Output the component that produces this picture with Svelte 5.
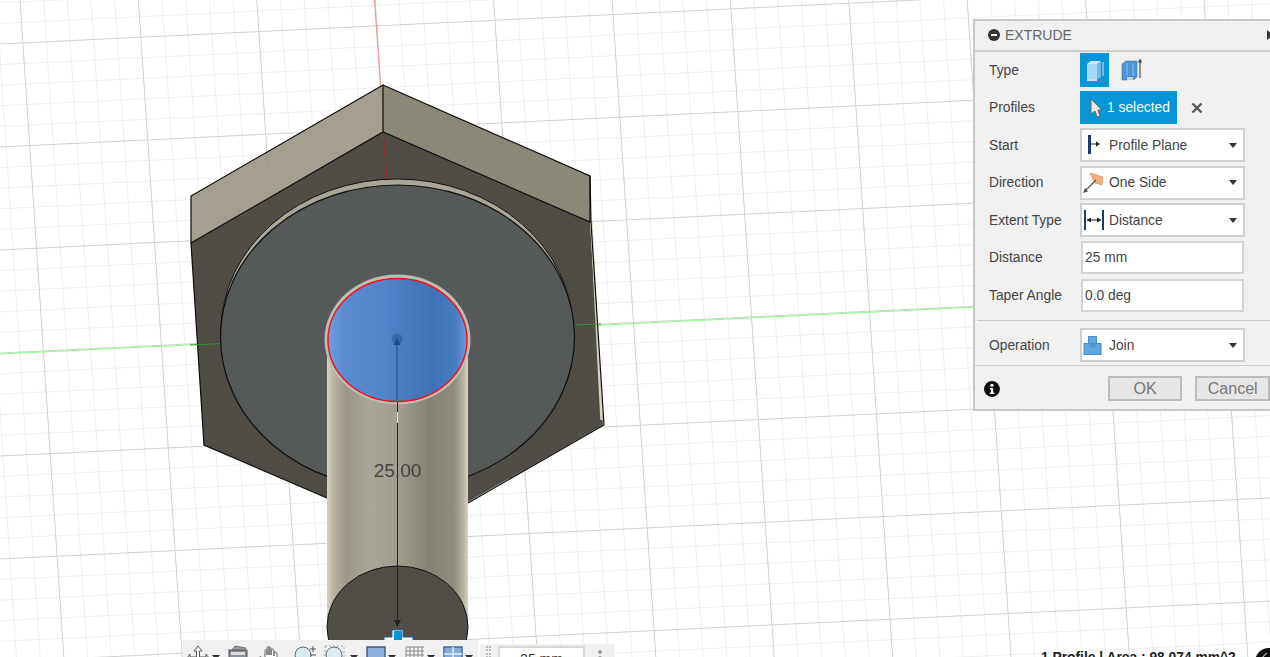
<script lang="ts">
	// viewport grid: nearly parallel lines, 5 minor cells per major cell
	const gridV = [];
	for (let k = -12; k <= 60; k++) {
		gridV.push({ x: 20 + 23.68 * k, major: k % 5 === 0 });
	}
	const gridH = [];
	for (let k = -5; k <= 36; k++) {
		gridH.push({ y: 44 + 20.6 * k, major: k % 5 === 0 });
	}
	const minorV = gridV.filter((l) => !l.major);
	const majorV = gridV.filter((l) => l.major);
	const minorH = gridH.filter((l) => !l.major);
	const majorH = gridH.filter((l) => l.major);

	const selects = [
		{ label: 'Start', value: 'Profile Plane', icon: 'start' },
		{ label: 'Direction', value: 'One Side', icon: 'direction' },
		{ label: 'Extent Type', value: 'Distance', icon: 'extent' }
	];
</script>

<div class="viewport">
	<svg class="scene" width="1270" height="657" viewBox="0 0 1270 657">
		<defs>
			<linearGradient id="cyl" x1="0" x2="1" y1="0" y2="0">
				<stop offset="0" stop-color="#d6d1c3" />
				<stop offset="0.05" stop-color="#b4af9f" />
				<stop offset="0.14" stop-color="#9b9688" />
				<stop offset="0.3" stop-color="#aaa79a" />
				<stop offset="0.52" stop-color="#a09d90" />
				<stop offset="0.72" stop-color="#858274" />
				<stop offset="0.9" stop-color="#8f8b7d" />
				<stop offset="0.97" stop-color="#bab5a5" />
				<stop offset="1" stop-color="#d9d3c2" />
			</linearGradient>
			<linearGradient id="face" x1="0" x2="1" y1="0" y2="0">
				<stop offset="0" stop-color="#6f9ddc" />
				<stop offset="0.12" stop-color="#5a8ad0" />
				<stop offset="0.4" stop-color="#5484cb" />
				<stop offset="0.75" stop-color="#3f72b8" />
				<stop offset="0.92" stop-color="#4a7cc2" />
				<stop offset="1" stop-color="#6d9ad8" />
			</linearGradient>
		</defs>

		{#each minorV as l}
			<line class="minor" x1={l.x} y1="0" x2={l.x + 43.8} y2="657" />
		{/each}
		{#each minorH as l}
			<line class="minor" x1="0" y1={l.y} x2="1270" y2={l.y - 61} />
		{/each}
		{#each majorV as l}
			<line class="major" x1={l.x} y1="0" x2={l.x + 43.8} y2="657" />
		{/each}
		{#each majorH as l}
			<line class="major" x1="0" y1={l.y} x2="1270" y2={l.y - 61} />
		{/each}

		<line class="axis-green" x1="0" y1="354" x2="1270" y2="293" />
		<line class="axis-red" x1="374.5" y1="0" x2="387" y2="180" />

		<!-- hex head -->
		<polygon class="face-left" points="191,196 383,85 383,132 191,243" />
		<polygon class="face-right" points="383,85 590,176 590,222 383,132" />
		<polygon class="face-dark" points="191,243 383,132 590,222 603,425 468,502 327,498 204,445" />
		<line class="axis-dim" x1="383" y1="132" x2="387" y2="180" />
		<line class="cream-edge" x1="591.5" y1="222" x2="601.5" y2="420" />
		<polyline class="edge" points="383,132 383,85 191,196 191,243 383,132 590,222 590,176 383,85" />
		<polyline class="edge" points="590,176 591,222 604,425 468,503" />
		<polyline class="edge" points="191,243 204,445 327,498" />

		<!-- counterbore -->
		<line class="axis-green-dim" x1="190" y1="345" x2="222" y2="343.5" />
		<line class="axis-green-dim" x1="573" y1="325" x2="601" y2="324" />
		<ellipse class="bore-ring" cx="397" cy="331" rx="176" ry="152" />
		<ellipse class="bore" cx="397.5" cy="337" rx="177" ry="152" />

		<!-- extruded cylinder -->
		<rect x="327" y="340" width="141" height="290" fill="url(#cyl)" />
		<ellipse class="cap-ring" cx="397.5" cy="339.5" rx="73" ry="65" />
		<ellipse class="cap" cx="397.5" cy="340" rx="69.5" ry="61.5" fill="url(#face)" />
		<ellipse class="end" cx="397.5" cy="627" rx="70.5" ry="61" />

		<!-- dimension -->
		<circle class="pivot" cx="397" cy="339" r="5.5" />
		<line class="dim-blue" x1="397" y1="342" x2="397" y2="401" />
		<polygon class="dim-head-blue" points="397,338 393.5,345 400.5,345" />
		<line class="dim-black" x1="397.5" y1="402" x2="397.5" y2="622" />
		<line class="dim-light" x1="397.5" y1="412" x2="397.5" y2="423" />
		<polygon class="dim-head" points="397.5,627 394,620 401,620" />
		<text class="dim-text" x="397.5" y="477" text-anchor="middle">25.00</text>

		<!-- drag handle -->
		<polygon class="pin" points="384,641 384,637 392,637 392,630 403,630 403,637 413,637 413,641" />
		<rect class="pin-fill" x="394" y="631" width="8" height="10" />
	</svg>

	<div class="panel">
		<div class="panel-head">
			<span class="collapse"></span>
			<span class="title">EXTRUDE</span>
			<span class="more"></span>
		</div>

		<div class="row">
			<span class="label">Type</span>
			<div class="type-btn active">
				<svg width="20" height="24" viewBox="0 0 20 24">
					<polygon points="2,6 6,3 16,3 12,6" fill="#d2ecfb" />
					<polygon points="12,6 16,3 16,19 12,22" fill="#70b8ea" />
					<rect x="2" y="6" width="10" height="15" fill="#a8d8f8" />
					<polygon points="2,21 12,21 12,23 2,23" fill="#d5dde2" />
					<line x1="18" y1="4" x2="18" y2="18" stroke="#cfe9f8" />
				</svg>
			</div>
			<div class="type-btn second">
				<svg width="22" height="24" viewBox="0 0 22 24">
					<polygon points="1,6 5,3 16,3 16,19 12,22 12,19 6,19 6,22 1,22" fill="#4f93d6" stroke="#3d78b4" stroke-width="0.6" />
					<line x1="6" y1="5" x2="6" y2="18" stroke="#8fc0ec" />
					<line x1="12" y1="5" x2="12" y2="18" stroke="#8fc0ec" />
					<rect x="6" y="19" width="6" height="3" fill="#c9ced2" />
					<line x1="19" y1="3" x2="19" y2="20" stroke="#333" />
					<polygon points="19,0.5 17,4.5 21,4.5" fill="#333" />
				</svg>
			</div>
		</div>

		<div class="row">
			<span class="label">Profiles</span>
			<div class="selected">
				<svg width="14" height="20" viewBox="0 0 14 20">
					<polygon points="2,1 2,16 6,13 8,19 11,18 9,12 13,12" fill="#e8e8e8" stroke="#666" />
				</svg>
				<span>1 selected</span>
			</div>
			<svg class="clear" width="12" height="12" viewBox="0 0 12 12">
				<path d="M1.5 1.5 L10.5 10.5 M10.5 1.5 L1.5 10.5" stroke="#555" stroke-width="2.4" />
			</svg>
		</div>

		{#each selects as s}
			<div class="row">
				<span class="label">{s.label}</span>
				<div class="select">
					<span class="icon">
						{#if s.icon === 'start'}
							<svg width="22" height="22" viewBox="0 0 22 22">
								<rect x="5" y="1" width="3" height="19" fill="#1f3a68" />
								<line x1="8" y1="10" x2="15" y2="10" stroke="#222" />
								<polygon points="17,10 13,7.5 13,12.5" fill="#222" />
							</svg>
						{:else if s.icon === 'direction'}
							<svg width="22" height="22" viewBox="0 0 22 22">
								<polygon points="7,1 20,5 19,13 12,11" fill="#f2ae7e" stroke="#d8915f" stroke-width="0.7" />
								<line x1="2" y1="19" x2="13" y2="8" stroke="#555" stroke-width="1.3" />
								<polygon points="0,21 5,19.5 2,16" fill="#555" />
							</svg>
						{:else}
							<svg width="22" height="22" viewBox="0 0 22 22">
								<rect x="1" y="1" width="2" height="20" fill="#1f3a68" />
								<rect x="19" y="1" width="2" height="20" fill="#1f3a68" />
								<line x1="4" y1="11" x2="18" y2="11" stroke="#222" />
								<polygon points="3.5,11 8,8.5 8,13.5" fill="#222" />
								<polygon points="18.5,11 14,8.5 14,13.5" fill="#222" />
							</svg>
						{/if}
					</span>
					<span class="value">{s.value}</span>
					<span class="caret"></span>
				</div>
			</div>
		{/each}

		<div class="row">
			<span class="label">Distance</span>
			<div class="input">25 mm</div>
		</div>
		<div class="row">
			<span class="label">Taper Angle</span>
			<div class="input">0.0 deg</div>
		</div>

		<div class="rule"></div>

		<div class="row">
			<span class="label">Operation</span>
			<div class="select">
				<span class="icon">
					<svg width="19" height="20" viewBox="0 0 19 20">
						<rect x="5.5" y="1.5" width="8" height="11" fill="#5ea6e0" stroke="#4a8cc4" />
						<rect x="1" y="8.5" width="17" height="11" fill="#5ea6e0" stroke="#4a8cc4" />
						<rect x="6" y="8.5" width="7" height="4" fill="#4f96d2" />
					</svg>
				</span>
				<span class="value">Join</span>
				<span class="caret"></span>
			</div>
		</div>

		<div class="panel-foot">
			<svg width="16" height="16" viewBox="0 0 16 16">
				<circle cx="8" cy="8" r="8" fill="#0b0b0b" />
				<circle cx="8" cy="4.2" r="1.6" fill="#fff" />
				<path d="M6 7 H9.2 V11.6 H10.4 V13 H5.8 V11.6 H7 V8.4 H6 Z" fill="#fff" />
			</svg>
			<button class="btn ok">OK</button>
			<button class="btn">Cancel</button>
		</div>
	</div>

	<div class="nav">
		<div class="nav-main">
			<svg class="tool" width="24" height="20" viewBox="0 0 24 20">
				<path d="M12 1 L8 6 H10.5 V12 H4 V9 L1 13 L4 17 V14 H20 V17 L23 13 L20 9 V12 H13.5 V6 H16 Z" fill="#fff" stroke="#555" />
			</svg>
			<span class="tool-caret"></span>
			<svg class="tool gap-cam" width="20" height="20" viewBox="0 0 20 20">
				<rect x="1" y="5" width="18" height="14" fill="#8a8f99" stroke="#555" />
				<polygon points="4,5 7,1 18,3 16,5" fill="#9a9a9a" stroke="#555" stroke-width="0.7" />
				<rect x="3" y="7" width="14" height="3" fill="#ddd" />
			</svg>
			<svg class="tool gap-hand" width="22" height="20" viewBox="0 0 22 20">
				<path d="M3 12 L7 15 V6 C7 4 9 4 9 6 V10 V3 C9 1 11 1 11 3 V10 V3 C11 1 13 2 13 4 V10 V5 C13 3 16 4 16 6 V11 V8 C16 6 19 7 19 9 V19 H7 L1 14 C1 12 2 11 3 12 Z" fill="#fff" stroke="#555" stroke-width="0.9" />
			</svg>
			<svg class="tool gap-zoom" width="24" height="20" viewBox="0 0 24 20">
				<circle cx="9" cy="10" r="8" fill="#d8eaf0" stroke="#666" />
				<path d="M19 1 V7 M16 4 H22 M16 10 H22" stroke="#555" />
			</svg>
			<svg class="tool gap-fit" width="22" height="20" viewBox="0 0 22 20">
				<rect x="1" y="1" width="19" height="18" fill="none" stroke="#aaa" stroke-dasharray="2 2" />
				<circle cx="10" cy="10" r="8" fill="#dcebef" stroke="#666" />
			</svg>
			<span class="tool-caret far"></span>
			<svg class="tool gap-disp" width="20" height="20" viewBox="0 0 20 20">
				<rect x="1" y="2" width="18" height="18" fill="#8cb0de" stroke="#4a5a78" stroke-width="1.5" />
			</svg>
			<span class="tool-caret"></span>
			<svg class="tool gap-grid" width="20" height="20" viewBox="0 0 20 20">
				<path d="M1 2 H19 M1 6 H19 M1 10 H19 M1 14 H19 M1 18 H19 M1 2 V20 M5 2 V20 M9 2 V20 M13 2 V20 M17 2 V20" stroke="#888" fill="none" />
			</svg>
			<span class="tool-caret"></span>
			<svg class="tool gap-view" width="20" height="20" viewBox="0 0 20 20">
				<rect x="1" y="2" width="18" height="18" fill="#86aedd" stroke="#4a6a98" stroke-width="1.5" />
				<path d="M10 2 V20 M1 9 H19" stroke="#e8eef5" stroke-width="1.5" />
			</svg>
			<span class="tool-caret"></span>
		</div>
		<div class="nav-units">
			<span class="grip"></span>
			<div class="units-box">25 mm</div>
			<span class="dots"></span>
		</div>
	</div>

	<div class="status">1 Profile | Area : 98.074 mm^2</div>
	<div class="badge"></div>
</div>

<style>
	:global(body) {
		margin: 0;
		background: #fff;
	}

	.viewport {
		position: relative;
		width: 1270px;
		height: 657px;
		overflow: hidden;
		background: #fff;
		font-family: 'Liberation Sans', Arial, sans-serif;
		font-size: 13.8px;
		color: #444;
	}

	.scene {
		position: absolute;
		left: 0;
		top: 0;
	}

	.minor {
		stroke: #efefef;
		stroke-width: 1;
	}

	.major {
		stroke: #cfcfcf;
		stroke-width: 1;
	}

	.axis-green {
		stroke: #8dfb8d;
		stroke-width: 1;
	}

	.axis-green-dim {
		stroke: #3f8f3a;
		stroke-width: 1;
	}

	.axis-red {
		stroke: #f98a8a;
		stroke-width: 1;
	}

	.axis-dim {
		stroke: #a02c2c;
		stroke-width: 1;
	}

	.face-left {
		fill: #9b9586;
		fill-opacity: 0.9;
	}

	.face-right {
		fill: #7f7b6a;
		fill-opacity: 0.9;
	}

	.face-dark {
		fill: #3d3a33;
		fill-opacity: 0.9;
	}

	.edge {
		fill: none;
		stroke: #0c0c0c;
		stroke-width: 1.2;
	}

	.cream-edge {
		stroke: #d9d3c0;
		stroke-width: 2.4;
	}

	.bore-ring {
		fill: #aaa698;
		stroke: #111;
		stroke-width: 1;
	}

	.bore {
		fill: #555a59;
		stroke: #0e0e0e;
		stroke-width: 1.2;
	}

	.cap-ring {
		fill: #bdbbb3;
	}

	.cap {
		stroke: #f01018;
		stroke-width: 1.4;
	}

	.end {
		fill: #504e47;
		stroke: #111;
		stroke-width: 1;
	}

	.pivot {
		fill: #2f5f9f;
		fill-opacity: 0.7;
	}

	.dim-blue {
		stroke: #1f4f92;
		stroke-width: 1;
	}

	.dim-head-blue {
		fill: #1a4a8c;
	}

	.dim-black {
		stroke: #222;
		stroke-width: 1;
	}

	.dim-light {
		stroke: #e4e2da;
		stroke-width: 1;
	}

	.dim-head {
		fill: #222;
	}

	.dim-text {
		font-family: 'Liberation Sans', Arial, sans-serif;
		font-size: 19px;
		fill: #444;
	}

	.pin {
		fill: #fff;
		stroke: #1f5f9a;
		stroke-width: 1;
	}

	.pin-fill {
		fill: #0696d7;
	}

	/* extrude dialog */
	.panel {
		position: absolute;
		left: 973px;
		top: 19px;
		width: 297px;
		height: 392px;
		box-sizing: border-box;
		background: #f0f0f0;
		border: 2px solid #c9c9c9;
		border-right: 0;
		display: flex;
		flex-direction: column;
	}

	.panel-head {
		flex: none;
		height: 28.5px;
		display: flex;
		align-items: center;
		gap: 5px;
		padding-left: 13px;
		border-bottom: 2px solid #cfcfcf;
		position: relative;
	}

	.collapse {
		width: 12px;
		height: 12px;
		border-radius: 50%;
		background: #333;
		position: relative;
	}

	.collapse::after {
		content: '';
		position: absolute;
		left: 3px;
		right: 3px;
		top: 5px;
		height: 2px;
		background: #eee;
	}

	.title {
		font-size: 14px;
		color: #666;
	}

	.more {
		position: absolute;
		right: -3px;
		top: 9px;
		border-left: 6px solid #333;
		border-top: 5px solid transparent;
		border-bottom: 5px solid transparent;
	}

	.row {
		flex: none;
		height: 37.5px;
		display: flex;
		align-items: center;
		padding-left: 14px;
	}

	.label {
		width: 91px;
		flex: none;
	}

	.type-btn {
		width: 29px;
		height: 34px;
		margin-right: 9px;
		display: flex;
		align-items: center;
		justify-content: center;
	}

	.type-btn.active {
		background: #0696d7;
	}

	.type-btn.second {
		margin-left: -1px;
	}

	.selected {
		width: 97px;
		height: 33px;
		box-sizing: border-box;
		padding-left: 9px;
		display: flex;
		align-items: center;
		gap: 4px;
		background: #0696d7;
		color: #fff;
	}

	.clear {
		margin-left: 14px;
	}

	.select {
		width: 165px;
		height: 34px;
		box-sizing: border-box;
		border: 2px solid #d0d0d0;
		background: #fff;
		display: flex;
		align-items: center;
		padding-left: 1px;
	}

	.icon {
		width: 26px;
		flex: none;
		display: flex;
		align-items: center;
		justify-content: flex-start;
	}

	.value {
		flex: 1;
	}

	.caret {
		width: 0;
		height: 0;
		margin-right: 6px;
		border-left: 4px solid transparent;
		border-right: 4px solid transparent;
		border-top: 5px solid #333;
	}

	.input {
		width: 163px;
		height: 33px;
		margin-left: 1px;
		box-sizing: border-box;
		border: 2px solid #d4d4d4;
		background: #fff;
		padding-left: 2px;
		display: flex;
		align-items: center;
	}

	.rule {
		flex: none;
		height: 0;
		margin: 6px 0 5.5px 2px;
		border-top: 1px solid #c6c6c6;
	}

	.panel-foot {
		flex: 1;
		display: flex;
		align-items: center;
		padding: 2px 0 0 9px;
		border-top: 1px solid #cfcfcf;
		margin-top: 1px;
	}

	.btn {
		height: 25px;
		box-sizing: border-box;
		padding: 0;
		border: 2px solid #bcbcbc;
		background: #e6e6e6;
		color: #777;
		font-family: inherit;
		font-size: 16px;
		width: 75px;
	}

	.btn.ok {
		margin-left: 108px;
		margin-right: 13px;
	}

	/* navigation bar, cut off by the bottom of the window */
	.nav {
		position: absolute;
		left: 183px;
		top: 640px;
		display: flex;
		align-items: flex-start;
		gap: 2px;
	}

	.nav-main {
		width: 295px;
		height: 30px;
		box-sizing: border-box;
		background: #f0f0f0;
		display: flex;
		align-items: flex-start;
		padding: 5px 0 0 3px;
	}

	.tool {
		flex: none;
	}

	.tool-caret {
		flex: none;
		width: 0;
		height: 0;
		margin: 10px 0 0 2px;
		border-left: 4px solid transparent;
		border-right: 4px solid transparent;
		border-top: 5px solid #333;
	}

	.tool-caret.far {
		margin-left: 4px;
	}

	.gap-cam {
		margin-left: 8px;
	}

	.gap-hand {
		margin-left: 10px;
	}

	.gap-zoom {
		margin-left: 14px;
	}

	.gap-fit {
		margin-left: 6px;
	}

	.gap-disp {
		margin-left: 8px;
	}

	.gap-grid {
		margin-left: 9px;
	}

	.gap-view {
		margin-left: 8px;
	}

	.nav-units {
		width: 135px;
		height: 30px;
		margin-top: 4px;
		box-sizing: border-box;
		background: #f0f0f0;
		display: flex;
		align-items: flex-start;
		padding: 2px 0 0 6px;
	}

	.grip {
		width: 5px;
		height: 12px;
		border-left: 2px dotted #bbb;
		border-right: 2px dotted #bbb;
		box-sizing: border-box;
	}

	.units-box {
		width: 87px;
		height: 24px;
		margin-left: 7px;
		box-sizing: border-box;
		border: 2px solid #d8d8d8;
		background: #fff;
		text-align: center;
		line-height: 22px;
		color: #333;
		font-size: 14px;
	}

	.dots {
		width: 4px;
		height: 4px;
		margin: 4px 0 0 13px;
		border-radius: 50%;
		background: #999;
		box-shadow: 0 6px 0 #999;
	}

	.status {
		position: absolute;
		left: 1041px;
		top: 650px;
		font-weight: 700;
		color: #222;
		white-space: nowrap;
	}

	.badge {
		position: absolute;
		left: 1255px;
		top: 648px;
		width: 28px;
		height: 28px;
		border-radius: 50%;
		background: #0c0c0c;
	}

	.badge::after {
		content: '';
		position: absolute;
		left: 8px;
		top: 6px;
		width: 6px;
		height: 6px;
		border-left: 1px solid #ccc;
		border-top: 1px solid #ccc;
		transform: rotate(-45deg);
	}
</style>
